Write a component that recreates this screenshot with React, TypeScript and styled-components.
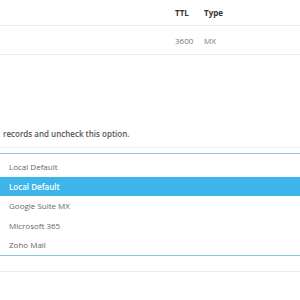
import { createGlobalStyle, styled } from "styled-components";

const GlobalStyle = createGlobalStyle`
  html, body {
    margin: 0;
    padding: 0;
    background: #fff;
  }
  body {
    font-family: "Open Sans", "Liberation Sans", sans-serif;
    font-size: 8px;
    color: #666;
  }
`;

const Page = styled.div`
  width: 300px;
  height: 300px;
  overflow: hidden;
  display: flex;
  flex-direction: column;
`;

const RecordRow = styled.div<{ $head?: boolean }>`
  display: grid;
  grid-template-columns: 175px 29px 1fr;
  align-items: center;
  height: ${({ $head }) => ($head ? "25px" : "28px")};
  border-bottom: 1px solid #ededed;
  font-weight: ${({ $head }) => ($head ? 700 : 400)};
  color: ${({ $head }) => ($head ? "#333" : "#777")};
`;

const Cell = styled.span`
  white-space: nowrap;
`;

const Hint = styled.p`
  margin: 71px 0 5px 3px;
  height: 16px;
  line-height: 16px;
  font-weight: 600;
  color: #555;
  white-space: nowrap;
`;

const Divider = styled.div`
  height: 1px;
  background: #f0f0f0;
`;

const Dropdown = styled.ul`
  list-style: none;
  margin: 5px 0 0 -2px;
  padding: 3px 0 0;
  border-top: 1px solid #86c9df;
  border-bottom: 1px solid #86c9df;
`;

const Option = styled.li<{ $active?: boolean }>`
  height: 19.5px;
  line-height: 19.5px;
  padding-left: 11px;
  background: ${({ $active }) => ($active ? "#3db5eb" : "transparent")};
  color: ${({ $active }) => ($active ? "#fff" : "#666")};
  font-weight: ${({ $active }) => ($active ? 600 : 400)};
`;

const Footer = styled.div`
  margin-top: 15px;
  height: 1px;
  background: #ececec;
`;

const options = [
  { label: "Local Default", active: true },
  { label: "Google Suite MX" },
  { label: "Microsoft 365" },
  { label: "Zoho Mail" },
];

function App() {
  return (
    <Page>
      <GlobalStyle />
      <RecordRow $head>
        <Cell />
        <Cell>TTL</Cell>
        <Cell>Type</Cell>
      </RecordRow>
      <RecordRow>
        <Cell />
        <Cell>3600</Cell>
        <Cell>MX</Cell>
      </RecordRow>
      <Hint>records and uncheck this option.</Hint>
      <Divider />
      <Dropdown>
        <Option>Local Default</Option>
        {options.map((o) => (
          <Option key={o.label} $active={o.active}>
            {o.label}
          </Option>
        ))}
      </Dropdown>
      <Footer />
    </Page>
  );
}

export default App;
